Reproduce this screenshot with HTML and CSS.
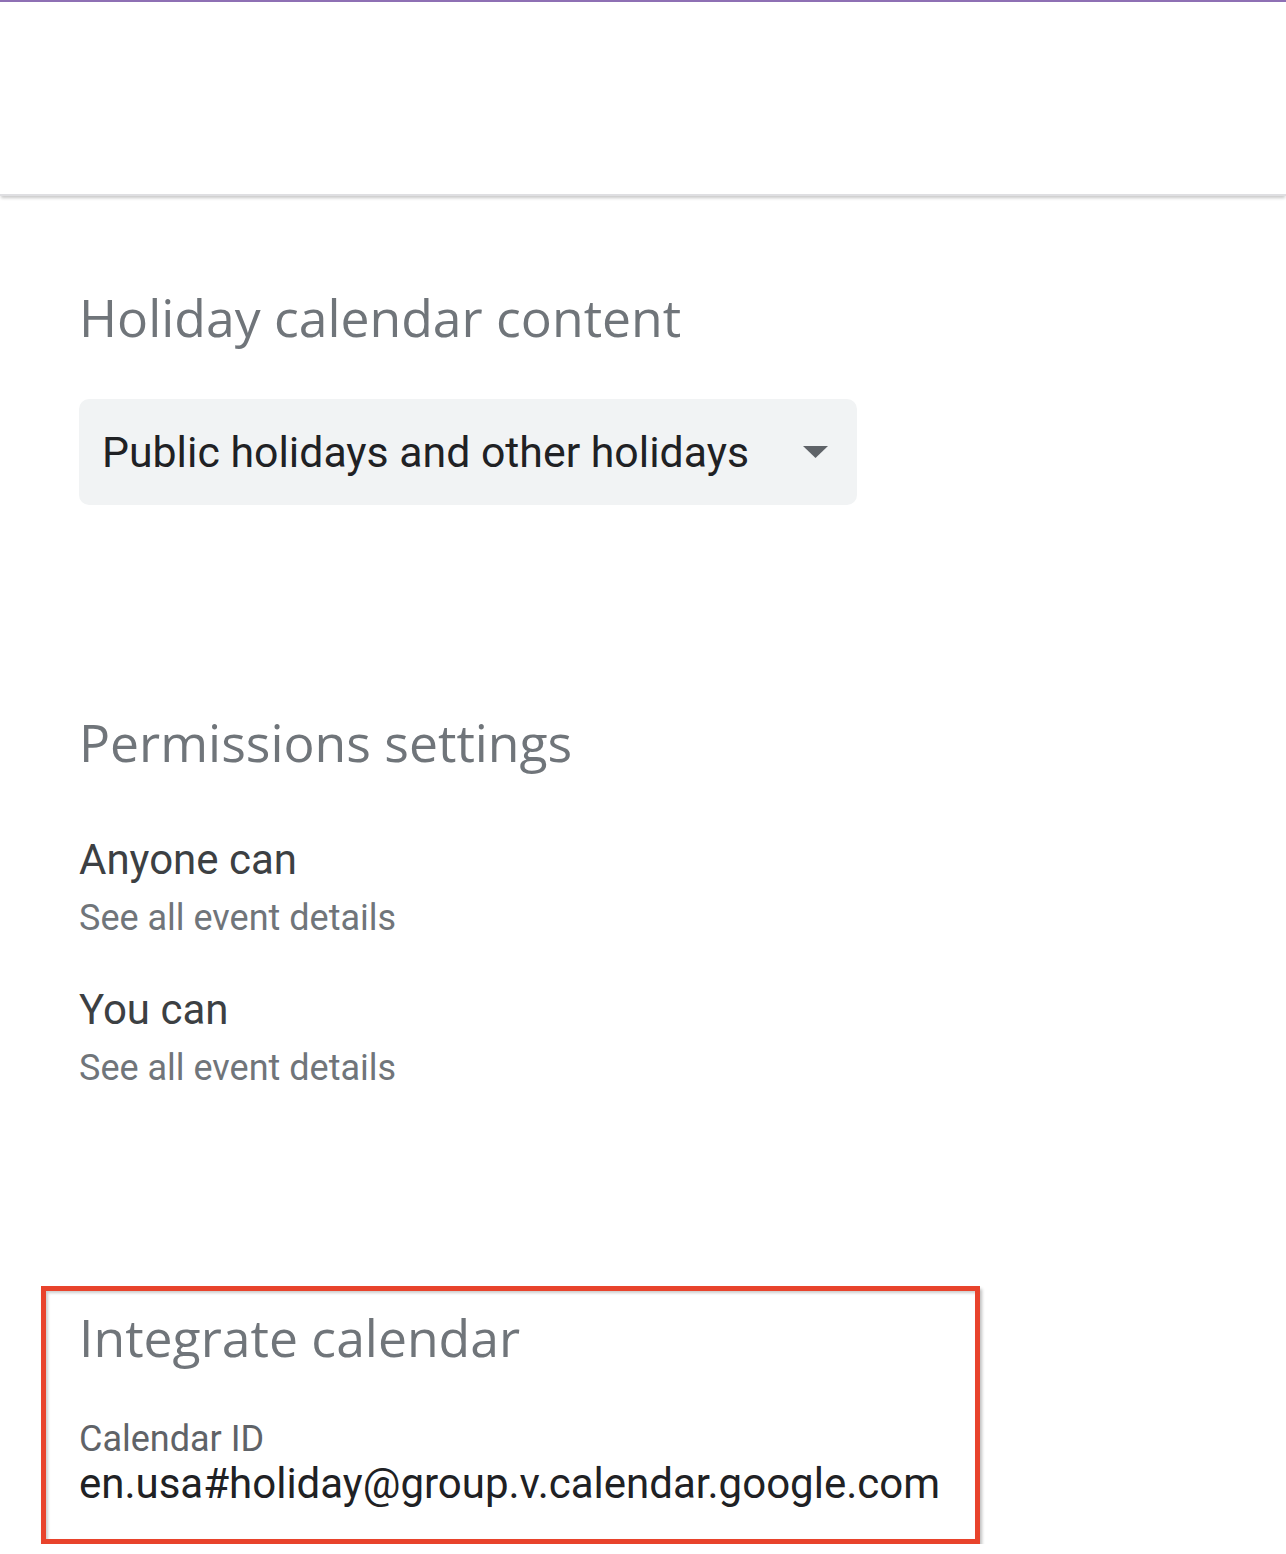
FILE: index.html
```html
<!DOCTYPE html>
<html lang="en">
<head>
  <meta charset="UTF-8">
  <meta name="viewport" content="width=device-width, initial-scale=1.0">
  <title>Holiday calendar settings</title>
  <link rel="stylesheet" href="styles.css">
</head>
<body>
  <header class="app-bar"></header>
  <main>
    <section class="section content-section">
      <h2 class="section-title">Holiday calendar content</h2>
      <div class="select-box">
        <span class="select-value">Public holidays and other holidays</span>
        <svg class="select-arrow" width="25" height="12" viewBox="0 0 25 12">
          <polygon points="0,0 25,0 12.5,12" fill="#5f6368"/>
        </svg>
      </div>
    </section>

    <section class="section permissions-section">
      <h2 class="section-title">Permissions settings</h2>
      <div class="perm">
        <div class="perm-label">Anyone can</div>
        <div class="perm-value">See all event details</div>
      </div>
      <div class="perm">
        <div class="perm-label">You can</div>
        <div class="perm-value">See all event details</div>
      </div>
    </section>

    <section class="section integrate-section">
      <h2 class="section-title">Integrate calendar</h2>
      <div class="field-label">Calendar ID</div>
      <div class="field-value">en.usa#holiday@group.v.calendar.google.com</div>
    </section>
  </main>
</body>
</html>
```

FILE: styles.css
```css
body {
  margin: 0;
  font-family: Roboto, "Liberation Sans", Arial, sans-serif;
  background-color: #fff;
  color: #3c4043;
}
.app-bar {
  height: 192px;
  background-color: #fff;
  border-top: 2px solid #8e70b4;
  border-bottom: 2px solid #dfdfe2;
  box-shadow: 0 3px 3px -1px rgba(0, 0, 0, 0.22);
}
main {
  padding: 0 0 0 41px;
}
.section {
  padding-left: 38px;
}
.section-title {
  margin: 0;
  font-family: "Open Sans", sans-serif;
  font-weight: 400;
  font-size: 51.7px;
  line-height: 64px;
  color: #70757a;
}
.content-section {
  padding-top: 89px;
}
.select-box {
  display: flex;
  align-items: center;
  justify-content: space-between;
  box-sizing: border-box;
  width: 778px;
  height: 106px;
  margin-top: 50px;
  padding: 0 29px 0 23px;
  background-color: #f1f3f4;
  border-radius: 10px;
}
.select-value {
  font-size: 42.8px;
  line-height: 106px;
  color: #202124;
}
.select-arrow {
  display: block;
}
.permissions-section {
  padding-top: 205px;
}
.perm {
  margin-top: 61px;
}
.perm + .perm {
  margin-top: 45px;
}
.perm-label {
  font-size: 42px;
  line-height: 50px;
  color: #3c4043;
}
.perm-value {
  margin-top: 11px;
  font-size: 36px;
  line-height: 44px;
  color: #70757a;
}
.integrate-section {
  box-sizing: border-box;
  width: 939px;
  margin-top: 196px;
  padding: 14px 0 32px 33px;
  border: 5px solid #e8432c;
  box-shadow: 2px 3px 3px rgba(0, 0, 0, 0.25), inset 2px 2px 3px rgba(0, 0, 0, 0.2);
}
.field-label {
  margin-top: 48px;
  font-size: 36px;
  line-height: 44px;
  color: #5f6368;
}
.field-value {
  font-size: 42px;
  line-height: 46px;
  color: #202124;
}
```
